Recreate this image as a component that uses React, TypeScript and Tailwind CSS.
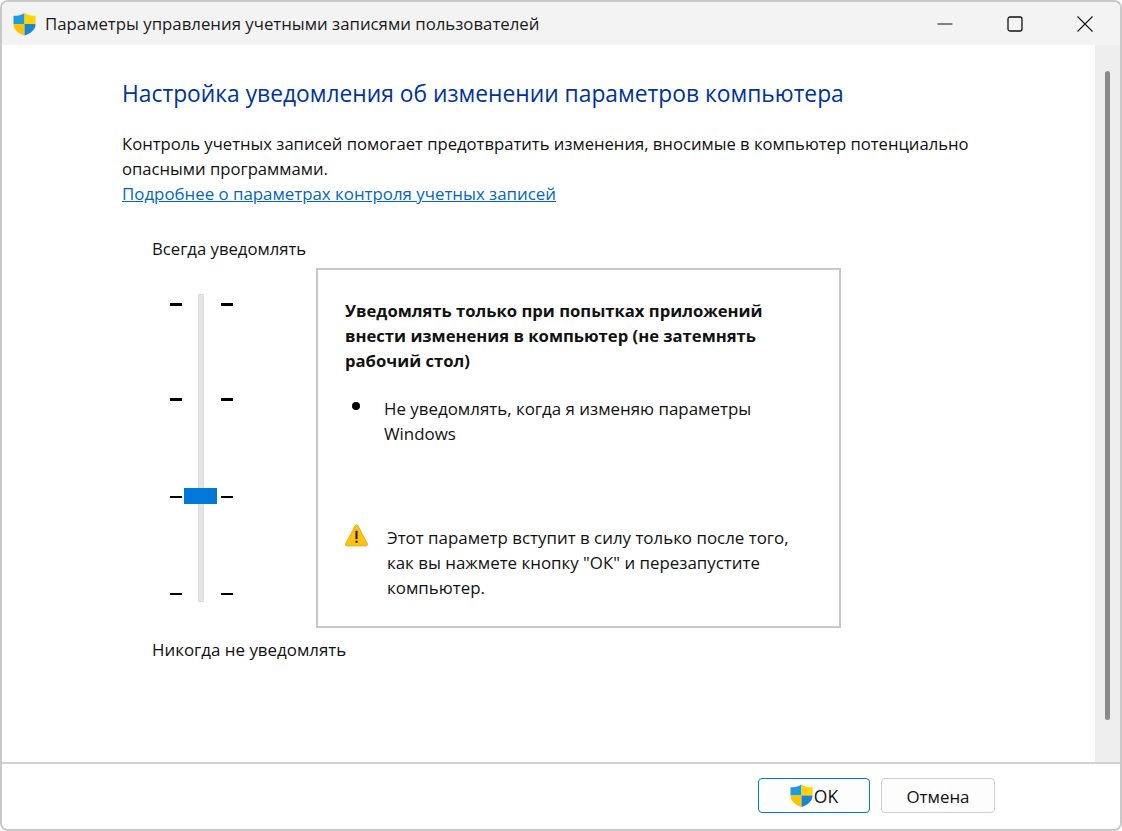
import React from "react";

function Shield({ className }: { className?: string }) {
  return (
    <svg viewBox="0 0 24 24" className={className}>
      <path d="M12 0.500 C9 2.500 5 3.500 0.500 3.500 L0.500 12 L12 12 Z" fill="#1e9be0" />
      <path d="M12 0.500 C15 2.500 19 3.500 23.500 3.500 L23.500 12 L12 12 Z" fill="#ffd200" />
      <path d="M0.500 12 L12 12 L12 24 C6 22 0.500 18.500 0.500 12 Z" fill="#ffc400" />
      <path d="M23.500 12 L12 12 L12 24 C18 22 23.500 18.500 23.500 12 Z" fill="#1a86cf" />
    </svg>
  );
}

function Warning() {
  return (
    <svg viewBox="0 0 22 22" className="w-[23px] h-[23px] shrink-0 -mt-px">
      <path
        d="M11 0.800 C11.700 0.800 12.200 1.200 12.500 1.800 L21.500 19 C22 20.200 21.300 21 20.200 21 L1.800 21 C0.700 21 0 20.200 0.500 19 L9.500 1.800 C9.800 1.200 10.300 0.800 11 0.800 Z"
        fill="#fdc214"
        stroke="#e8a200"
        strokeWidth="0.700"
      />
      <rect x="10" y="6.500" width="2" height="8" fill="#222" />
      <rect x="10" y="16" width="2" height="2" fill="#222" />
    </svg>
  );
}

function Ticks({ className }: { className?: string }) {
  return (
    <div className={`flex flex-col w-3 ${className ?? ""}`}>
      <div className="h-[3px] bg-black mt-[9px]" />
      <div className="h-[3px] bg-black mt-[92px]" />
      <div className="h-[2px] bg-black mt-[95px]" />
      <div className="h-[2px] bg-black mt-[95px]" />
    </div>
  );
}

export default function App() {
  return (
    <div className="w-[1122px] h-[831px] bg-white font-['Open_Sans','Noto_Sans',sans-serif] text-[16.900px] text-[#111] overflow-hidden">
      <div className="w-full h-full flex flex-col border-2 border-[#c8c8c8] rounded-lg overflow-hidden">
        {/* title bar */}
        <div className="h-[43px] shrink-0 bg-[#f3f3f3] flex items-center pl-[11px]">
          <Shield className="w-[23px] h-[24px]" />
          <span className="ml-[9px] text-[16.800px] text-[#1a1a1a]">
            Параметры управления учетными записями пользователей
          </span>
          <div className="ml-auto flex items-center">
            <svg width="16" height="16" viewBox="0 0 16 16" className="mr-[54px]">
              <path d="M0.500 8 H15.500" stroke="#111" strokeWidth="1" />
            </svg>
            <svg width="16" height="16" viewBox="0 0 16 16" className="mr-[54px]">
              <rect x="1" y="1" width="14" height="14" rx="2" fill="none" stroke="#111" strokeWidth="1.300" />
            </svg>
            <svg width="16" height="16" viewBox="0 0 16 16" className="mr-[27px]">
              <path d="M0.500 0.500 L15.500 15.500 M15.500 0.500 L0.500 15.500" stroke="#111" strokeWidth="1.100" />
            </svg>
          </div>
        </div>

        {/* body + scrollbar */}
        <div className="flex-1 flex min-h-0">
          <div className="flex-1 pl-[120px] pt-[31px]">
            <h1 className="text-[22.800px] leading-[36px] text-[#003399]">
              Настройка уведомления об изменении параметров компьютера
            </h1>
            <div className="mt-[19px] leading-[25px] w-[880px] text-[16.650px]">
              Контроль учетных записей помогает предотвратить изменения, вносимые в компьютер потенциально опасными программами.
              <br />
              <a className="text-[#0067c0] underline text-[16.850px]">Подробнее о параметрах контроля учетных записей</a>
            </div>

            <div className="ml-[30px] mt-[30px] leading-[25px] text-[16.700px]">Всегда уведомлять</div>

            <div className="flex mt-[7px]">
              {/* slider */}
              <div className="ml-[48px] h-[360px] w-[146px] flex items-start pt-[26px] shrink-0">
                <Ticks />
                <div className="relative ml-[16px] w-[6px] h-[308px] bg-[#e3e4e5] border border-[#dcdcdc]">
                  <div className="absolute left-[-15px] top-[193px] w-[33px] h-[16px] bg-[#0078d7]" />
                </div>
                <Ticks className="ml-[17px]" />
              </div>

              {/* description box */}
              <div className="w-[525px] h-[360px] border-2 border-[#c8c8c8] pl-[27px] pt-[28px] leading-[25px]">
                <div className="font-bold w-[460px] text-[16.650px]">
                  Уведомлять только при попытках приложений внести изменения в компьютер (не затемнять рабочий стол)
                </div>
                <div className="flex mt-[23px]">
                  <div className="w-2 h-2 rounded-full bg-black ml-[7px] mt-[6px] shrink-0 blur-[0.4px]" />
                  <div className="ml-[24px] w-[400px]">Не уведомлять, когда я изменяю параметры Windows</div>
                </div>
                <div className="flex mt-[79px]">
                  <Warning />
                  <div className="ml-[19px] w-[420px]">
                    Этот параметр вступит в силу только после того, как вы нажмете кнопку "ОК" и перезапустите компьютер.
                  </div>
                </div>
              </div>
            </div>

            <div className="ml-[30px] mt-[9px] leading-[25px]">Никогда не уведомлять</div>
          </div>

          <div className="w-[25px] bg-[#eeeeee] relative shrink-0">
            <div className="absolute left-[10px] top-[26px] w-[5px] h-[649px] rounded-full bg-[#8a8a8a]" />
          </div>
        </div>

        {/* footer */}
        <div className="h-[67px] shrink-0 border-t-2 border-[#d0d0d0] bg-white flex items-start pt-[14px] pl-[756px]">
          <button className="w-[112px] h-[35px] border border-[#0078d4] rounded bg-[#fdfdfd] flex items-center justify-center text-[17.500px]">
            <Shield className="w-[23px] h-[23px]" />
            <span className="pt-[1px] ml-[1px]">OK</span>
          </button>
          <button className="ml-[11px] w-[114px] h-[35px] border border-[#d0d0d0] rounded bg-[#fdfdfd] pt-[2px]">Отмена</button>
        </div>
      </div>
    </div>
  );
}
